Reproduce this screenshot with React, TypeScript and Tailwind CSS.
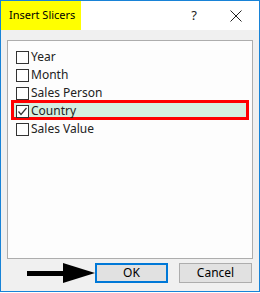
const items = ["Year", "Month", "Sales Person", "Country", "Sales Value"];

const Checkbox: React.FC<{ checked?: boolean }> = ({ checked }) => (
    <div className="w-[13px] h-[13px] border border-[#333333] bg-white shrink-0 flex items-center justify-center">
        {checked && (
            <svg width="11" height="11" viewBox="0 0 11 11">
                <path d="M1.5 5.5 L4 8.5 L9.5 2" fill="none" stroke="#333333" strokeWidth="1.2" />
            </svg>
        )}
    </div>
);

const App: React.FC = () => {
    return (
        <div className="w-[260px] h-[293px] bg-white" style={{ fontFamily: '"Noto Sans", "Open Sans", sans-serif' }}>
            <div className="w-[260px] h-[292px] border border-[#1883d7] bg-[#f0f0f0] flex flex-col">
                {/* title bar */}
                <div className="h-[29px] bg-white flex items-center shrink-0">
                    <div className="h-full w-[80px] bg-[#ffff00] flex items-center pl-[8px] text-[11px] text-black whitespace-nowrap">
                        Insert Slicers
                    </div>
                    <div className="flex-1" />
                    <span className="text-[13px] text-[#222] mr-[33px]">?</span>
                    <svg width="12" height="12" viewBox="0 0 12 12" className="mr-[17px]">
                        <path d="M0.5 0.5 L11.5 11.5 M11.5 0.5 L0.5 11.5" stroke="#222" strokeWidth="1" />
                    </svg>
                </div>

                {/* field list */}
                <div className="pt-[10px] pl-[6px]">
                    <div className="w-[246px] h-[219px] border border-[#adadad] bg-[#fdfdfd] pt-[7px]">
                        {items.map((item) => (
                            <div key={item} className="relative h-[18px] flex items-center pl-[8px] text-[12px] text-[#222]">
                                {item === "Country" && (
                                    <div className="absolute -top-[2px] bottom-0 left-[3px] right-[3px] border-[3px] border-[#ff0000] bg-[#d5efe0]" />
                                )}
                                <div className="relative flex items-center gap-[2px]">
                                    <Checkbox checked={item === "Country"} />
                                    <span>{item}</span>
                                </div>
                            </div>
                        ))}
                    </div>
                </div>

                {/* buttons */}
                <div className="mt-[4px] flex items-center pl-[26px]">
                    <svg width="68" height="20" viewBox="0 0 68 20">
                        <rect x="0" y="8" width="38" height="5" fill="#000" />
                        <polygon points="36,0 68,10 36,20" fill="#000" />
                    </svg>
                    <button className="w-[73px] h-[20px] bg-[#e1e1e1] border-2 border-[#0078d7] text-[12px] text-black flex items-center justify-center">
                        OK
                    </button>
                    <button className="ml-[11px] w-[73px] h-[20px] bg-[#e1e1e1] border border-[#adadad] text-[12px] text-black flex items-center justify-center">
                        Cancel
                    </button>
                </div>
            </div>
        </div>
    );
};

export default App;
